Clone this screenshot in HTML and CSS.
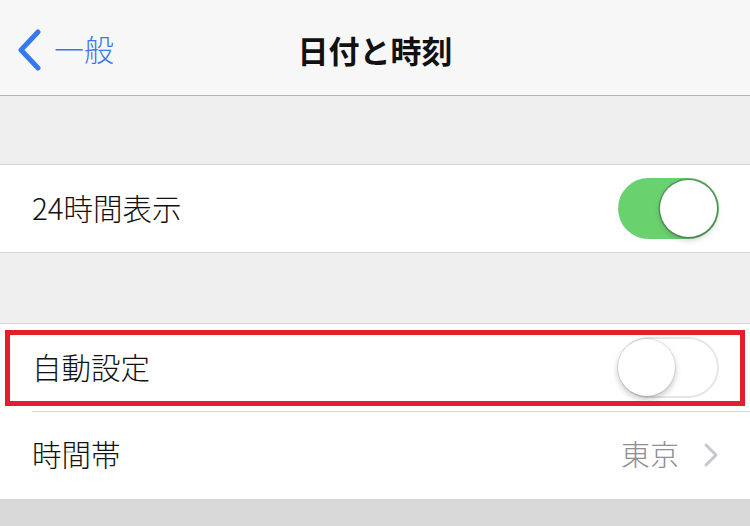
FILE: index.html
```html
<!DOCTYPE html>
<html lang="ja">
<head>
  <meta charset="UTF-8">
  <title>日付と時刻</title>
  <meta name="viewport" content="width=device-width, initial-scale=1">
  <link rel="stylesheet" href="styles.css">
</head>
<body>

<header class="navbar">
  <a class="back" href="#">
    <svg class="back-icon" width="26" height="42" viewBox="0 0 26 42">
      <path d="M22 3 L5 21 L22 39" fill="none" stroke="#3579f0" stroke-width="5" stroke-linecap="round" stroke-linejoin="round"/>
    </svg>
    <span>一般</span>
  </a>
  <h1 class="title">日付と時刻</h1>
</header>

<div class="spacer"></div>

<section class="group">
  <div class="cell">
    <span class="cell-label">24時間表示</span>
    <span class="switch on"><span class="knob"></span></span>
  </div>
</section>

<div class="spacer tall"></div>

<section class="group">
  <div class="cell highlighted">
    <span class="cell-label">自動設定</span>
    <span class="switch"><span class="knob"></span></span>
    <div class="mark"></div>
  </div>
  <div class="cell">
    <span class="cell-label">時間帯</span>
    <span class="cell-value">東京</span>
    <svg class="chevron" width="16" height="26" viewBox="0 0 16 26">
      <path d="M3 3 L13 13 L3 23" fill="none" stroke="#c7c7cc" stroke-width="3" stroke-linecap="round" stroke-linejoin="round"/>
    </svg>
  </div>
</section>

<div class="footer-gray"></div>

</body>
</html>
```

FILE: styles.css
```css
* {
  box-sizing: border-box;
}

html, body {
  margin: 0;
  height: 100%;
}

body {
  background: #efefef;
  font-family: "Noto Sans CJK JP", "Noto Sans", sans-serif;
  color: #111;
  overflow: hidden;
}

.navbar {
  position: relative;
  height: 96px;
  background: #f7f7f7;
  border-bottom: 1px solid #b5b5b5;
  display: flex;
  align-items: center;
  justify-content: center;
}

.back {
  position: absolute;
  left: 16px;
  top: 29px;
  display: flex;
  align-items: center;
  gap: 12px;
  color: #3a78e6;
  text-decoration: none;
  font-size: 30px;
  font-weight: 300;
  line-height: 42px;
}

.back span {
  margin-top: -4px;
}

.title {
  margin: 0;
  font-size: 31px;
  font-weight: 700;
  color: #111;
  margin-top: 4px;
}

.spacer {
  height: 68px;
}
.spacer.tall {
  height: 70px;
}

.group {
  background: #fff;
  border-top: 1px solid #d6d6d6;
  border-bottom: 1px solid #d6d6d6;
}

.cell {
  position: relative;
  height: 87px;
  display: flex;
  align-items: center;
  padding: 0 31px 0 32px;
}

.cell + .cell {
  height: 88px;
}
.cell + .cell::before {
  content: "";
  position: absolute;
  top: 0;
  left: 32px;
  right: 0;
  border-top: 1px solid #d6d6d6;
}

.cell-label {
  flex: 1;
  font-size: 29.5px;
  font-weight: 300;
  margin-top: -4px;
}

.cell-value {
  font-size: 29px;
  font-weight: 300;
  color: #8e8e93;
  margin-right: 24px;
  margin-top: -4px;
}

.switch {
  position: relative;
  width: 101px;
  height: 61px;
  border-radius: 31px;
  background: #fff;
  box-shadow: inset 0 0 0 2px #e6e6e6;
}
.switch.on {
  background: #69d26f;
  box-shadow: none;
}

.knob {
  position: absolute;
  top: 2px;
  left: 0;
  width: 57px;
  height: 57px;
  border-radius: 50%;
  background: #fff;
  box-shadow: 0 3px 6px rgba(0, 0, 0, 0.25), 0 0 0 1px rgba(0, 0, 0, 0.08);
}
.switch.on .knob {
  left: 42px;
  box-shadow: 0 3px 6px rgba(0, 0, 0, 0.2), 0 0 0 1.5px #5d9a62;
}

.mark {
  position: absolute;
  left: 5px;
  top: 6px;
  width: 740px;
  height: 76px;
  border: 5px solid #e2202d;
  pointer-events: none;
}

.footer-gray {
  height: 40px;
  background: #d9d9d9;
}
```
